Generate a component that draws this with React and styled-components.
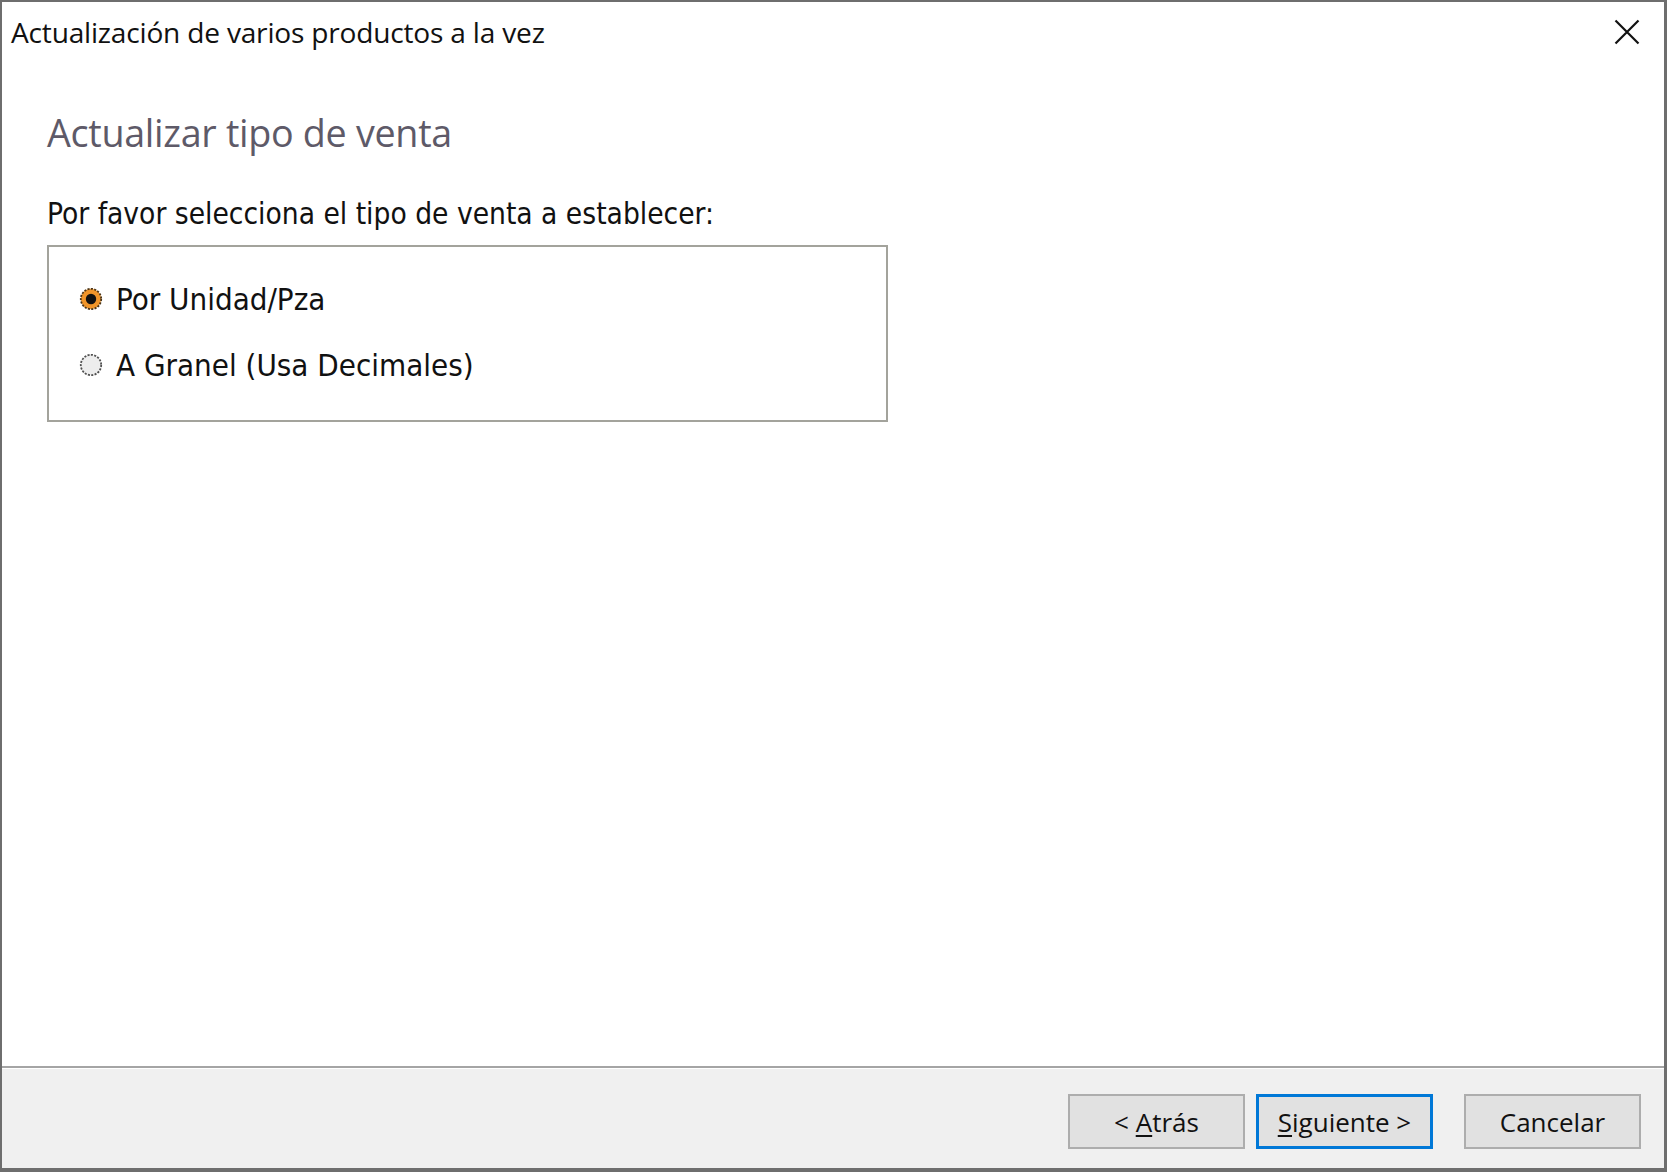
import React from "react";
import styled, { createGlobalStyle } from "styled-components";

const Global = createGlobalStyle`
  html, body { margin: 0; padding: 0; background: #ffffff; }
  body { width: 1667px; height: 1172px; overflow: hidden; }
  #root { width: 1667px; height: 1172px; }
`;

const uiFont = `"Open Sans", "Noto Sans", sans-serif`;
const tahoma = `"DejaVu Sans Condensed", "DejaVu Sans", "Liberation Sans", sans-serif`;

const Window = styled.div`
  box-sizing: border-box;
  width: 1667px;
  height: 1172px;
  background: #ffffff;
  border-style: solid;
  border-color: #6e6e6e;
  border-width: 2px 3px 4px 2px;
  display: flex;
  flex-direction: column;
`;

const TitleBar = styled.div`
  height: 60px;
  display: flex;
  align-items: center;
  justify-content: space-between;
  padding: 0 24px 0 9px;
  flex-shrink: 0;
`;

const TitleText = styled.div`
  font-family: ${uiFont};
  font-size: 28.1px;
  color: #111111;
  letter-spacing: -0.2px;
`;

const CloseButton = styled.div`
  width: 26px;
  height: 26px;
  display: flex;
  align-items: center;
  justify-content: center;
`;

const Body = styled.div`
  flex: 1;
  padding: 48px 0 0 45px;
  display: flex;
  flex-direction: column;
`;

const Heading = styled.div`
  font-family: ${uiFont};
  font-size: 37.7px;
  color: #5e5a68;
  line-height: 46px;
  letter-spacing: -0.3px;
`;

const Instruction = styled.div`
  margin-top: 40px;
  font-family: ${tahoma};
  font-size: 29.6px;
  line-height: 36px;
  color: #111111;
`;

const GroupBox = styled.div`
  box-sizing: border-box;
  margin-top: 13px;
  width: 841px;
  height: 177px;
  border: 2px solid #a3a39c;
  display: flex;
  flex-direction: column;
  gap: 30px;
  padding: 34px 0 0 30px;
`;

const RadioRow = styled.label`
  display: flex;
  align-items: center;
  gap: 13px;
  height: 36px;
  font-family: ${tahoma};
  font-size: 31px;
  color: #111111;
`;

const Footer = styled.div`
  box-sizing: border-box;
  flex-shrink: 0;
  height: 102px;
  background: #f0f0f0;
  border-top: 2px solid #a5a5a5;
  box-shadow: inset 0 1px 0 #ffffff;
  display: flex;
  justify-content: flex-end;
  align-items: flex-start;
  padding: 26px 23px 0 0;
`;

const Buttons = styled.div`
  display: flex;
  gap: 11px;
`;

const Button = styled.div`
  box-sizing: border-box;
  width: 177px;
  height: 55px;
  background: #e1e1e1;
  border: ${(p) => (p.$primary ? "3px solid #0078d7" : "2px solid #adadad")};
  display: flex;
  align-items: center;
  justify-content: center;
  font-family: ${uiFont};
  font-size: 26px;
  color: #111111;
  margin-left: ${(p) => (p.$gapLeft ? `${p.$gapLeft}px` : "0")};
  u { text-decoration-thickness: 2px; text-underline-offset: 3px; }
`;

const Radio = ({ checked }) => (
  <svg width="24" height="24" viewBox="0 0 24 24">
    <circle
      cx="12"
      cy="12"
      r="10.2"
      fill={checked ? "#f0952a" : "#ededed"}
      stroke={checked ? "#4a3418" : "#505050"}
      strokeWidth="1.8"
      strokeDasharray="2.1 1.3"
    />
    {checked && <circle cx="12" cy="12" r="5.2" fill="#111111" />}
  </svg>
);

export default function App() {
  return (
    <>
      <Global />
      <Window>
        <TitleBar>
          <TitleText>Actualización de varios productos a la vez</TitleText>
          <CloseButton>
            <svg width="26" height="26" viewBox="0 0 26 26">
              <path d="M1.5 1.5 L24.5 24.5 M24.5 1.5 L1.5 24.5" stroke="#111" strokeWidth="2.2" />
            </svg>
          </CloseButton>
        </TitleBar>
        <Body>
          <Heading>Actualizar tipo de venta</Heading>
          <Instruction>Por favor selecciona el tipo de venta a establecer:</Instruction>
          <GroupBox>
            <RadioRow>
              <Radio checked />
              Por Unidad/Pza
            </RadioRow>
            <RadioRow>
              <Radio />
              A Granel (Usa Decimales)
            </RadioRow>
          </GroupBox>
        </Body>
        <Footer>
          <Buttons>
            <Button>
              &lt;&nbsp;<u>A</u>trás
            </Button>
            <Button $primary>
              <u>S</u>iguiente &gt;
            </Button>
            <Button $gapLeft={20}>Cancelar</Button>
          </Buttons>
        </Footer>
      </Window>
    </>
  );
}
